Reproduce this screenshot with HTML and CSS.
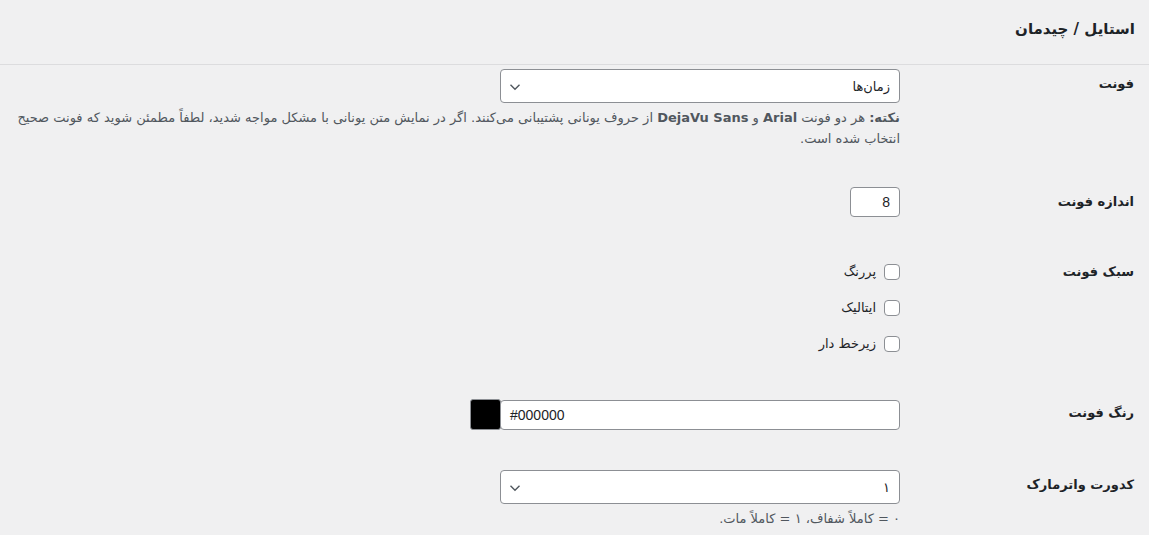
FILE: index.html
```html
<!DOCTYPE html>
<html lang="fa" dir="rtl">
<head>
  <meta charset="UTF-8">
  <meta name="viewport" content="width=device-width, initial-scale=1.0">
  <title>استایل / چیدمان</title>
<link rel="stylesheet" href="styles.css">
</head>
<body>
<div class="panel">
  <div class="panel-head">
    <h2 class="panel-title">استایل / چیدمان</h2>
  </div>

  <div class="row row-font">
    <div class="label">فونت</div>
    <div class="field">
      <div class="select">
        <span class="select-value">زمان‌ها</span>
        <svg class="chev" width="12" height="8" viewBox="0 0 12 8"><path d="M1.5 1.8 6 6.2 10.5 1.8" fill="none" stroke="#50575e" stroke-width="1.4"/></svg>
      </div>
      <p class="desc"><span class="line"><b>نکته:</b> هر دو فونت <b class="latin">Arial</b> و <b class="latin">DejaVu Sans</b> <span>از حروف یونانی پشتیبانی می‌کنند.</span> <span>اگر در نمایش متن یونانی با مشکل مواجه شدید، لطفاً مطمئن شوید که فونت صحیح</span></span>
        <span class="line">انتخاب شده است.</span></p>
    </div>
  </div>

  <div class="row row-size">
    <div class="label">اندازه فونت</div>
    <div class="field">
      <div class="num">8</div>
    </div>
  </div>

  <div class="row row-style">
    <div class="label">سبک فونت</div>
    <div class="field checks">
      <label class="check"><span class="box"></span>پررنگ</label>
      <label class="check"><span class="box"></span>ایتالیک</label>
      <label class="check"><span class="box"></span>زیرخط دار</label>
    </div>
  </div>

  <div class="row row-color">
    <div class="label">رنگ فونت</div>
    <div class="field color-field">
      <div class="text-input" dir="ltr">#000000</div>
      <span class="swatch"></span>
    </div>
  </div>

  <div class="row row-opacity">
    <div class="label">کدورت واترمارک</div>
    <div class="field">
      <div class="select">
        <span class="select-value">۱</span>
        <svg class="chev" width="12" height="8" viewBox="0 0 12 8"><path d="M1.5 1.8 6 6.2 10.5 1.8" fill="none" stroke="#50575e" stroke-width="1.4"/></svg>
      </div>
      <p class="desc">۰ = کاملاً شفاف، ۱ = کاملاً مات.</p>
    </div>
  </div>
</div>
</body>
</html>
```

FILE: styles.css
```css
* {
  box-sizing: border-box;
}

body {
  margin: 0;
  background: #f0f0f1;
  color: #1d2327;
  font-family: "DejaVu Sans", "Noto Sans", sans-serif;
  font-size: 13px;
}

.panel-head {
  height: 65px;
  border-bottom: 1px solid #dcdcde;
  padding: 18px 14px 0 14px;
}

.panel-title {
  margin: 0;
  font-size: 15px;
  font-weight: bold;
  line-height: 22px;
}

.row {
  display: flex;
  padding: 0 14px 0 13px;
}

.label {
  width: 235px;
  flex: none;
  font-weight: bold;
  font-size: 13px;
  line-height: 20px;
  padding-right: 1px;
}

.field {
  flex: 1;
}

/* select box */
.select {
  width: 400px;
  height: 34px;
  background: #fff;
  border: 1px solid #8c8f94;
  border-radius: 4px;
  display: flex;
  align-items: center;
  justify-content: space-between;
  padding: 0 9px 0 8px;
}

.chev {
  margin-top: 1px;
}

.desc {
  margin: 4px 0 0;
  color: #50575e;
  line-height: 21px;
}

.desc .line {
  display: block;
}

.desc b {
  color: #50575e;
}

.latin {
  unicode-bidi: isolate;
}

.row-font {
  padding-top: 4px;
}
.row-font .label {
  padding-top: 5px;
}

.row-size {
  padding-top: 38px;
}
.row-size .label {
  padding-top: 5px;
}

.num {
  width: 50px;
  height: 30px;
  background: #fff;
  border: 1px solid #8c8f94;
  border-radius: 4px;
  text-align: right;
  padding: 5px 9px 0 0;
  line-height: 18px;
  font-family: "Liberation Sans", Arial, sans-serif;
  font-size: 14px;
}

.row-style {
  padding-top: 45px;
}

.checks {
  display: flex;
  flex-direction: column;
  gap: 16px;
}

.check {
  display: flex;
  align-items: center;
  gap: 8px;
  line-height: 20px;
}

.box {
  width: 16px;
  height: 16px;
  border: 1px solid #8c8f94;
  border-radius: 4px;
  background: #fff;
}

.row-color {
  padding-top: 45px;
}
.row-color .label {
  padding-top: 4px;
}

.color-field {
  display: flex;
  align-items: center;
}

.text-input {
  width: 400px;
  height: 30px;
  background: #fff;
  border: 1px solid #8c8f94;
  border-radius: 4px;
  padding: 0 9px;
  line-height: 28px;
  font-family: "Liberation Sans", Arial, sans-serif;
  font-size: 14px;
}

.swatch {
  width: 31px;
  height: 31px;
  background: #000;
  border: 1px solid #8c8f94;
  border-radius: 3px;
  margin-right: -1px;
}

.row-opacity {
  padding-top: 40px;
}
.row-opacity .label {
  padding-top: 5px;
}
.row-opacity .desc {
  margin-top: 4px;
}
```
